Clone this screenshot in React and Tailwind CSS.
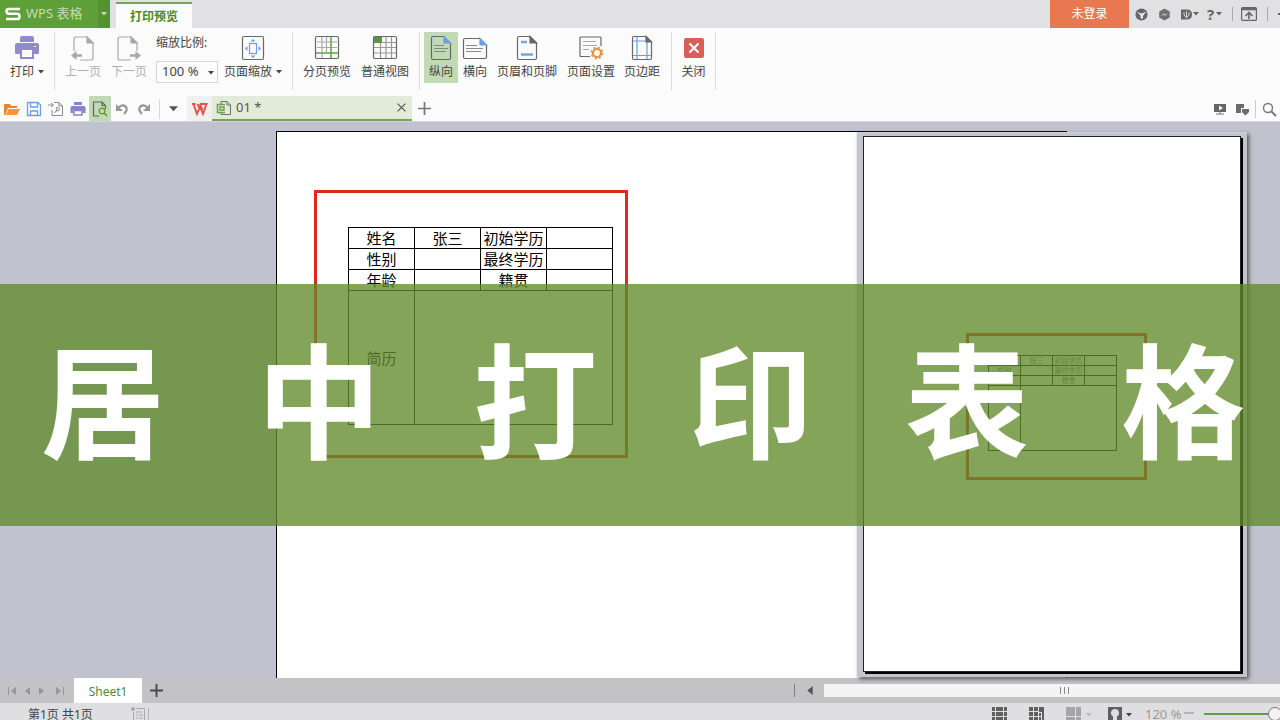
import { useState } from 'react'

const rows = [
  ['姓名', '张三', '初始学历', ''],
  ['性别', '', '最终学历', ''],
  ['年龄', '', '籍贯', ''],
]

const Caret = ({ className = '' }) => (
  <svg viewBox="0 0 6 4" className={`w-[6px] h-[4px] shrink-0 ${className}`} fill="currentColor"><path d="M0 0h6L3 3.6z" /></svg>
)

const Divider = ({ className = '' }) => <span className={`w-px shrink-0 ${className}`} />

/* ---------- Ribbon icons (26 x 26) ---------- */
const Icon = ({ children }) => (
  <svg viewBox="0 0 26 26" className="w-[26px] h-[26px] shrink-0" fill="none" stroke="#66696c" strokeWidth="1.2">{children}</svg>
)

const PrinterIcon = () => (
  <Icon>
    <g fill="#8f8cc9" stroke="none">
      <path d="M6 3q0-2 2-2h10q2 0 2 2v4H6z" />
      <path d="M3 8h20q2 0 2 2v8q0 1-1 1h-4v-4H6v4H2q-1 0-1-1v-8q0-2 2-2z" />
      <path d="M6 13h14v11H6zM8 15v7h10v-7z" fillRule="evenodd" />
    </g>
    <path d="M5 7.5h16M20 11.5h2" stroke="#fbfbfb" />
  </Icon>
)

const PrevIcon = () => (
  <Icon>
    <g stroke="#a9a9a9">
      <path d="M4 16V4q0-2 2-2h11l6 6v15q0 2-2 2H10" />
      <path d="M17 2v6h6z" fill="#a9a9a9" />
      <path d="M12 20.500H4" strokeWidth="2.600" />
      <path d="M6.500 16v9l-5.500-4.500z" fill="#a9a9a9" stroke="none" />
    </g>
  </Icon>
)

const NextIcon = () => (
  <Icon>
    <g stroke="#a9a9a9">
      <path d="M21 16V8l-6-6H4Q2 2 2 4v19q0 2 2 2h11" />
      <path d="M15 2v6h6z" fill="#a9a9a9" />
      <path d="M14 20.500h8" strokeWidth="2.600" />
      <path d="M19.500 16v9l5.500-4.500z" fill="#a9a9a9" stroke="none" />
    </g>
  </Icon>
)

const PageZoomIcon = () => (
  <Icon>
    <rect x="2.500" y="1.500" width="21" height="23" rx="1.500" />
    <rect x="9.500" y="8.500" width="7" height="10" stroke="#6b9fe0" />
    <g fill="#6b9fe0" stroke="none">
      <path d="M13 4l2.500 2.500h-5zM13 23l2.500-2.500h-5zM5 13.500L7.500 11v5zM21 13.500L18.500 11v5z" />
    </g>
  </Icon>
)

const PageBreakIcon = () => (
  <Icon>
    <path d="M3 7h13M3 12.500h13M8 2v15M12.500 2v15M16 7h7M16 12.500h7M8 18v6" stroke="#aaa" />
    <rect x="1.500" y="1.500" width="23" height="22" rx="1.500" />
    <path d="M17 2v21M2 18h22" stroke="#62a04a" strokeWidth="1.500" />
  </Icon>
)

const NormalViewIcon = () => (
  <Icon>
    <path d="M2 7.500h22M2 12.500h22M2 18h22M8.500 2v21M14 2v21M19.500 2v21" stroke="#999" />
    <rect x="1.500" y="1.500" width="23" height="22" rx="1.500" />
    <path d="M2 2h8v6H2z" fill="#5e9440" stroke="none" />
  </Icon>
)

const PortraitIcon = () => (
  <Icon>
    <path d="M16 1.500H5q-1.500 0-1.500 1.500v20q0 1.500 1.500 1.500h16q1.500 0 1.500-1.500V8" />
    <path d="M16 1.500v6.500h6.500z" fill="#6b9fe0" stroke="#6b9fe0" />
    <path d="M6 10.500h10M6 13.500h14M6 16.500h12" stroke="#7b8f78" />
  </Icon>
)

const LandscapeIcon = () => (
  <Icon>
    <path d="M18 3.500H3Q1.500 3.500 1.500 5v17q0 1.500 1.500 1.500h20q1.500 0 1.500-1.500V10" />
    <path d="M18 3.500V10h6.500z" fill="#6b9fe0" stroke="#6b9fe0" />
    <path d="M4 10.500h11M4 13.500h17M4 16.500h15" stroke="#8a8a8a" />
  </Icon>
)

const HeaderFooterIcon = () => (
  <Icon>
    <path d="M16 1.500H5q-1.500 0-1.500 1.500v20q0 1.500 1.500 1.500h16q1.500 0 1.500-1.500V8z" />
    <path d="M16 1.500v6.500h6.500z" fill="#66696c" />
    <path d="M7 7h6M7 19.500h12" stroke="#7aa5dd" strokeWidth="2.500" />
  </Icon>
)

const PageSetupIcon = () => (
  <Icon>
    <path d="M12 21.500H3q-1 0-1-1V3q0-1 1-1h19q1 0 1 1v8" />
    <path d="M5 6.500h13M5 10.500h14M5 14.500h6" stroke="#aaa" />
    <circle cx="19" cy="18" r="4" stroke="#e99340" strokeWidth="2.200" fill="#fff" />
    <circle cx="19" cy="18" r="5.500" stroke="#e99340" strokeWidth="1.800" strokeDasharray="2.200 2.120" />
  </Icon>
)

const MarginsIcon = () => (
  <Icon>
    <path d="M17 1.500H5Q3.500 1.500 3.500 3v20q0 1.500 1.500 1.500h16q1.500 0 1.500-1.500V7z" />
    <path d="M8 2v22M18 7v17M4 6h13M4 20.500h18" stroke="#6b9fe0" />
    <path d="M17 1.500V7h5.500z" fill="#66696c" />
  </Icon>
)

const CloseIcon = () => (
  <Icon>
    <rect x="3" y="3" width="20" height="20" rx="2" fill="#d65f58" stroke="none" />
    <path d="M8.500 8.500l9 9M17.500 8.500l-9 9" stroke="#fff" strokeWidth="2.200" />
  </Icon>
)

function RibbonButton({ icon, label, caret, muted, active, className }) {
  return (
    <button className={`flex flex-col items-center h-[51px] pt-[3px] shrink-0 ${className} ${active ? 'bg-[#c1dab5]' : ''} ${muted ? 'text-[#b0b0b0]' : 'text-[#444]'}`}>
      {icon}
      <span className="flex items-center gap-1 h-[22px] leading-[24px] whitespace-nowrap">
        {label}
        {caret && <Caret />}
      </span>
    </button>
  )
}

const Group = ({ children, className = '' }) => (
  <div className={`flex h-[58px] border-r border-[#dcdcdf] shrink-0 ${className}`}>{children}</div>
)

/* ---------- Title bar ---------- */
function TitleBar() {
  return (
    <header className="flex h-7 bg-[#e1e1e3] shrink-0 text-[#666]">
      <button className="flex items-center w-[110px] bg-[#5f9f38] text-[#c5dcb5] text-[13px] shrink-0">
        <svg viewBox="0 0 16 14" className="w-[16px] h-[14px] ml-[5px]" fill="none" stroke="#fff" strokeWidth="2.600">
          <path d="M15 2H4Q1.500 2 1.500 4.300T4 6.800h8q2.500 0 2.500 2.600T12 12H1" />
        </svg>
        <span className="ml-[5px] flex-1 text-left whitespace-nowrap">WPS 表格</span>
        <span className="flex items-center justify-center w-3 h-full bg-[#56922f]"><Caret /></span>
      </button>
      <button className="w-[76px] ml-[6px] mt-[2px] pt-[2px] border-t-2 border-[#75a35c] bg-[#fbfbfb] text-[#4a8a2b] font-bold text-xs shrink-0">打印预览</button>
      <div className="flex-1" />
      <button className="w-[79px] bg-[#e8784f] text-white text-xs shrink-0">未登录</button>
      <div className="flex items-center w-[151px] shrink-0 overflow-hidden">
        <button aria-label="皮肤" className="ml-[6px]">
          <svg viewBox="0 0 14 14" className="w-[13px] h-[13px]">
            <circle cx="7" cy="7" r="6.500" fill="#666" />
            <path d="M2 4l5 2 5-2-3 4-1 4-2-1 0-3z" fill="#e8e8e8" />
          </svg>
        </button>
        <button aria-label="服务" className="ml-[10px]">
          <svg viewBox="0 0 14 14" className="w-[13px] h-[13px]">
            <path d="M7 .5l5.700 3.200v6.600L7 13.500l-5.700-3.200V3.700z" fill="#707070" />
            <path d="M3 8.500l4-3v2l4-2-4 3.500v-2z" fill="#ddd" />
          </svg>
        </button>
        <button aria-label="稻壳" className="ml-[10px] flex items-center gap-px">
          <svg viewBox="0 0 12 13" className="w-[11px] h-[13px]">
            <path d="M0 1h6q6 0 6 5.500T6 12H0z" fill="#666" />
            <path d="M3 4q0 5 3 6 3-1 3-6M6 3v7" fill="none" stroke="#e1e1e3" />
          </svg>
          <Caret />
        </button>
        <button aria-label="帮助" className="ml-[8px] flex items-center gap-[2px] text-[15px] font-bold leading-none">
          <span>?</span>
          <Caret />
        </button>
        <Divider className="h-[14px] ml-[10px] bg-[#aaa]" />
        <button aria-label="隐藏功能区" className="ml-[8px]">
          <svg viewBox="0 0 16 14" className="w-[16px] h-[14px]" fill="none" stroke="#666" strokeWidth="1.200">
            <rect x=".6" y=".6" width="14.800" height="12.800" rx="1" />
            <path d="M1 2h14" strokeWidth="2.500" />
            <path d="M8 12V5.500M4.500 9L8 5.500 11.500 9" strokeWidth="1.600" />
          </svg>
        </button>
        <Divider className="h-[14px] ml-[10px] bg-[#aaa]" />
        <button aria-label="最小化" className="ml-[10px] w-3 h-[2px] bg-[#666] shrink-0" />
      </div>
    </header>
  )
}

/* ---------- Ribbon ---------- */
function Ribbon() {
  return (
    <nav className="flex h-[68px] pt-1 bg-[#fbfbfb] shrink-0 text-xs">
      <Group>
        <RibbonButton icon={<PrinterIcon />} label="打印" caret className="w-[54px]" />
      </Group>
      <Group className="pl-[5px] pr-[6px]">
        <RibbonButton icon={<PrevIcon />} label="上一页" muted className="w-[46px]" />
        <RibbonButton icon={<NextIcon />} label="下一页" muted className="w-[46px]" />
        <div className="w-[68px] px-1 text-[#444]">
          <label htmlFor="scale" className="block h-[29px] leading-[22px] whitespace-nowrap">缩放比例:</label>
          <div className="relative">
            <select id="scale" defaultValue="100" className="appearance-none block w-[62px] h-[22px] pl-[5px] border border-[#d5d5d8] bg-[#fdfdfd] text-[13px]">
              <option value="100">100 %</option>
              <option value="75">75 %</option>
              <option value="50">50 %</option>
            </select>
            <Caret className="absolute right-[2px] top-[10px] pointer-events-none" />
          </div>
        </div>
        <RibbonButton icon={<PageZoomIcon />} label="页面缩放" caret className="w-[66px]" />
      </Group>
      <Group className="px-[5px]">
        <RibbonButton icon={<PageBreakIcon />} label="分页预览" className="w-[58px]" />
        <RibbonButton icon={<NormalViewIcon />} label="普通视图" className="w-[58px]" />
      </Group>
      <Group className="pl-1 pr-[7px]">
        <RibbonButton icon={<PortraitIcon />} label="纵向" active className="w-[34px]" />
        <RibbonButton icon={<LandscapeIcon />} label="横向" className="w-[34px]" />
        <RibbonButton icon={<HeaderFooterIcon />} label="页眉和页脚" className="w-[70px]" />
        <RibbonButton icon={<PageSetupIcon />} label="页面设置" className="w-[58px]" />
        <RibbonButton icon={<MarginsIcon />} label="页边距" className="w-[44px]" />
      </Group>
      <Group>
        <RibbonButton icon={<CloseIcon />} label="关闭" className="w-[43px]" />
      </Group>
    </nav>
  )
}

/* ---------- Quick access + document tabs ---------- */
const Tool = ({ label, className = '', children }) => (
  <button aria-label={label} className={`flex items-center justify-center w-[22px] h-full shrink-0 ${className}`}>
    <svg viewBox="0 0 16 16" className="w-[16px] h-[16px]" fill="none">{children}</svg>
  </button>
)

function QuickBar() {
  return (
    <div className="flex h-[26px] bg-[#fbfbfb] border-b border-[#d4d5dc] shrink-0 pl-px">
      <Tool label="打开">
        <path d="M0 3h6l1 2h6v2H4l-3 7H0z" fill="#e8832c" />
        <path d="M4.500 8H16l-3 6H1.500z" fill="#f59637" />
      </Tool>
      <Tool label="保存">
        <path d="M1.500 1.500H12L14.500 4v10.500h-13z" stroke="#6c9fdc" strokeWidth="1.300" />
        <path d="M4.500 2v4h7V2M4.500 14v-4h7v4" stroke="#6c9fdc" strokeWidth="1.300" />
      </Tool>
      <Tool label="输出为PDF">
        <path d="M6 1.500h5l3.500 3.500v9.500H4V9M11 1.500V5h3.500" stroke="#8c8c8c" />
        <path d="M0 4h5M3 2l2.500 2L3 6" stroke="#8c8c8c" />
        <path d="M6 12q3-1 3-6 4 1 2 3.500l-3 .5" stroke="#8c8c8c" />
      </Tool>
      <Tool label="打印">
        <path d="M4 1h8v3H4zM2 5h12q1.500 0 1.500 1.500V12H13V9H3v3H.5V6.500Q.5 5 2 5z" fill="#8784c6" />
        <path d="M4 9.500h8V14H4z" stroke="#8784c6" strokeWidth="1.500" />
      </Tool>
      <Tool label="打印预览" className="bg-[#c1dab5]">
        <path d="M7 15H1.500V1H10l3.500 3.500V8M10 1v3.500h3.500" stroke="#5d6b58" strokeWidth="1.200" />
        <circle cx="10" cy="10" r="2.800" stroke="#5e9440" strokeWidth="1.200" />
        <path d="M12 12l3 3" stroke="#5e9440" strokeWidth="1.600" />
      </Tool>
      <Tool label="撤销">
        <path d="M4 7q4-4 7-2 4 3-1 8" stroke="#979797" strokeWidth="2.200" />
        <path d="M2 3v7h7z" fill="#979797" />
      </Tool>
      <Tool label="恢复">
        <path d="M12 7Q8 3 5 5q-4 3 1 8" stroke="#979797" strokeWidth="2.200" />
        <path d="M14 3v7H7z" fill="#979797" />
      </Tool>
      <Divider className="h-[20px] mt-[3px] ml-1 bg-[#d8d8d8]" />
      <button aria-label="自定义快速访问工具栏" className="flex items-center justify-center w-[27px] text-[#555]">
        <svg viewBox="0 0 10 6" className="w-[9px] h-[6px]"><path d="M0 0h10L5 5.500z" fill="currentColor" /></svg>
      </button>
      <Tool label="WPS" className="w-[25px] bg-[#f0f0f1]">
        <path d="M0 3h3.500M1.500 3l3.500 10 3-7 3 7 3.500-10H8M5.500 3l2 4M8 3l2.500 6" stroke="#e4504a" strokeWidth="1.900" />
      </Tool>
      <div className="flex items-center w-[200px] h-full bg-[#e2ebda] border-b-2 border-[#75a35c] text-[#555] text-[13px] shrink-0">
        <svg viewBox="0 0 16 16" className="w-[16px] h-[16px] ml-1" fill="none">
          <path d="M5 4V1.500h6L14.500 5v9.500H5V13M11 1.500V5h3.500" stroke="#707070" />
          <path d="M9 4.500H1.500v8H9M4 7h4v3H4z" stroke="#6da052" strokeWidth="1.500" />
        </svg>
        <button className="flex-1 ml-1 text-left">01 *</button>
        <button aria-label="关闭标签" className="mr-[6px]">
          <svg viewBox="0 0 8 8" className="w-[9px] h-[9px]" stroke="#555"><path d="M.5.5l7 7M7.500.5l-7 7" /></svg>
        </button>
      </div>
      <button aria-label="新建标签" className="flex items-center ml-[6px]">
        <svg viewBox="0 0 12 12" className="w-[13px] h-[13px]" stroke="#777" strokeWidth="1.600"><path d="M6 0v12M0 6h12" /></svg>
      </button>
      <div className="flex-1" />
      <Tool label="播放">
        <path d="M2 3h12v8H2zM7 4.500v5L11 7z" fill="#666" fillRule="evenodd" />
        <path d="M4 13h8M7 12h2" stroke="#777" />
      </Tool>
      <Tool label="窗口">
        <path d="M2 3h8v4H7v5H2zM8 8h7v3l-3.500 3.500L8 11z" fill="#6b6b6b" />
      </Tool>
      <Divider className="h-[18px] mt-[4px] mx-[2px] bg-[#ccc]" />
      <Tool label="查找">
        <circle cx="7" cy="7" r="4.500" stroke="#777" strokeWidth="1.400" />
        <path d="M10.500 10.500L15 15" stroke="#777" strokeWidth="2" />
      </Tool>
    </div>
  )
}

/* ---------- Printed form, full size and miniature ---------- */
function ResumeForm({ small }) {
  const cell = 'border border-black p-0 whitespace-nowrap overflow-hidden'
  const line = small ? 'h-[10px]' : 'h-[21px]'
  return (
    <table className={`table-fixed border-collapse text-center text-black ${small ? 'w-[129px] text-[7px] leading-[8px]' : 'w-[265px] text-[15px] leading-[20px]'}`}>
      <tbody>
        {rows.map((row, i) => (
          <tr key={i} className={line}>
            {row.map((text, j) => <td key={j} className={`${cell} ${small ? 'text-[#777]' : ''}`}>{text}</td>)}
          </tr>
        ))}
        <tr className={small ? 'h-[65px]' : 'h-[134px]'}>
          <td className={`${cell} ${small ? 'text-[#777]' : ''}`}>简历</td>
          <td colSpan={3} className={cell}></td>
        </tr>
      </tbody>
    </table>
  )
}

function Workspace() {
  return (
    <main className="relative flex-1 min-h-0 overflow-hidden bg-[#c0c3cf]">
      <div className="w-[791px] h-[1120px] ml-[276px] mt-[9px] pt-[58px] pl-[37px] border border-black bg-white">
        <div className="w-[314px] h-[268px] border-3 border-[#df2a1b] pt-[34px] pl-[31px]">
          <ResumeForm />
        </div>
      </div>
    </main>
  )
}

/* Floating whole-page preview laid over the workspace */
function PagePreview() {
  return (
    <aside className="absolute right-[33px] top-[132px] w-[390px] h-[545px] pt-[3px] pl-[6px] bg-[#c3c5cf] border-t border-[#d3d3d4] shadow-[2px_2px_4px_#55564f]">
      <div className="w-[378px] h-[536px] border border-[#222] bg-white shadow-[2px_2px_0_#000] pt-[196px] pl-[102px]">
        <div className="w-[181px] h-[147px] border-3 border-[#df2a1b] pt-[19px] pl-[19px]">
          <ResumeForm small />
        </div>
      </div>
    </aside>
  )
}

function Banner() {
  return (
    <h1 className="absolute inset-x-0 top-[284px] h-[242px] pl-[41px] pr-[35px] pb-2 flex items-center justify-between bg-[rgba(97,138,42,0.78)] text-white text-[124px] leading-none font-bold">
      {[...'居中打印表格'].map(char => <span key={char}>{char}</span>)}
    </h1>
  )
}

/* ---------- Bottom bars ---------- */
const Arrow = ({ label, d }) => (
  <button aria-label={label}>
    <svg viewBox="0 0 8 10" className="w-[8px] h-[10px]" fill="#97979a"><path d={d} /></svg>
  </button>
)

function SheetBar() {
  return (
    <div className="flex items-center h-[25px] bg-[#c3c3c5] shrink-0 overflow-hidden">
      <div className="flex items-center w-[74px] pl-2 shrink-0">
        <Arrow label="第一张" d="M0 1h1v8H0zM8 1v8L3 5z" />
        <span className="ml-2 flex gap-[5px]">
          <Arrow label="上一张" d="M6 1v8L1 5z" />
          <Arrow label="下一张" d="M2 1v8l5-4z" />
        </span>
        <span className="ml-[11px] flex"><Arrow label="最后一张" d="M0 1v8l5-4zM7 1h1v8H7z" /></span>
      </div>
      <button className="w-[68px] h-full pt-[2px] bg-white text-[#4e8c34] text-xs">Sheet1</button>
      <button aria-label="新建工作表" className="ml-2">
        <svg viewBox="0 0 12 12" className="w-[13px] h-[13px]" stroke="#4c4c4c" strokeWidth="1.800"><path d="M6 0v12M0 6h12" /></svg>
      </button>
      <div className="flex-1" />
      <div className="flex items-center w-[510px] -mr-6 shrink-0">
        <Divider className="h-[13px] bg-[#808080]" />
        <button aria-label="向左滚动" className="w-[29px] flex justify-center">
          <svg viewBox="0 0 6 10" className="w-[6px] h-[9px]" fill="#555"><path d="M6 0v10L0 5z" /></svg>
        </button>
        <div className="flex-1 flex items-center justify-center gap-[3px] h-[13px] bg-[#f4f4f5]">
          <Divider className="h-[7px] bg-[#888]" />
          <Divider className="h-[7px] bg-[#888]" />
          <Divider className="h-[7px] bg-[#888]" />
        </div>
      </div>
    </div>
  )
}

const ViewIcon = ({ label, fill = '#606060', className = '', children }) => (
  <button aria-label={label} className={className}>
    <svg viewBox="0 0 15 15" className="w-[15px] h-[15px]" fill={fill}>{children}</svg>
  </button>
)

function StatusBar() {
  const [zoom, setZoom] = useState(120)
  return (
    <footer className="flex h-[17px] overflow-hidden bg-[#dfdfe1] shrink-0 text-xs text-[#444]">
      <div className="flex items-start flex-1 pl-7 pt-[3px]">
        <span className="leading-[18px] w-[68px] whitespace-nowrap">第1页 共1页</span>
        <svg viewBox="0 0 14 14" className="w-[14px] h-[14px] ml-[35px] mt-px" fill="none" stroke="#aaa">
          <circle cx="2" cy="2" r="2" fill="#aaa" stroke="none" />
          <path d="M5 1.500h8.500V14M2.500 5v9M5 5h6M5 8h2M8 8h4M5 11h2M8 11h4" />
        </svg>
        <Divider className="h-[14px] mt-[2px] ml-[3px] bg-[#b5b5b5]" />
      </div>
      <div className="flex items-start w-[288px] pt-1 shrink-0">
        <ViewIcon label="普通视图">
          <path d="M0 0h3v4H0zM4 0h7v4H4zM12 0h3v4h-3zM0 5h3v4H0zM4 5h7v4H4zM12 5h3v4h-3zM0 10h3v4H0zM4 10h7v4H4zM12 10h3v4h-3z" />
        </ViewIcon>
        <ViewIcon label="分页视图" className="ml-[22px]">
          <path d="M0 0h4v4H0zM5 0h4v4H5zM10 0h5v15h-2V5h-3zM0 5h4v4H0zM5 5h4v4H5zM0 10h4v4H0zM5 10h4v4H5zM10 6h2v3h-2zM10 10h2v4h-2z" />
        </ViewIcon>
        <ViewIcon label="阅读模式" fill="#a5a5a7" className="ml-[22px]">
          <path d="M0 0h9v9H0zM10 0h5v9h-5zM0 10h9v4H0zM10 10h5v4h-5z" />
        </ViewIcon>
        <Caret className="mt-[6px] ml-[5px] text-[#bbb]" />
        <ViewIcon label="护眼模式" className="ml-[16px]">
          <path d="M0 0h14v15H0zM7 2a4 4 0 0 0-2 7.500V13h4V9.500A4 4 0 0 0 7 2z" fillRule="evenodd" />
        </ViewIcon>
        <Caret className="mt-[6px] ml-[3px]" />
        <label htmlFor="zoom" className="ml-[13px] w-[40px] text-[13px] leading-[14px] text-[#999] whitespace-nowrap">{zoom} %</label>
        <button aria-label="缩小" className="mt-[5px] ml-[2px] w-[10px] h-[2px] bg-[#b5b5b7] shrink-0" />
        <input
          id="zoom"
          type="range"
          min="10"
          max="210"
          value={zoom}
          onChange={e => setZoom(Number(e.target.value))}
          className="appearance-none w-[132px] h-[14px] ml-[10px] shrink-0 bg-transparent [&::-webkit-slider-runnable-track]:h-[2px] [&::-webkit-slider-runnable-track]:bg-[#5f9f45] [&::-webkit-slider-thumb]:appearance-none [&::-webkit-slider-thumb]:size-[14px] [&::-webkit-slider-thumb]:-mt-[6px] [&::-webkit-slider-thumb]:rounded-full [&::-webkit-slider-thumb]:border [&::-webkit-slider-thumb]:border-[#777] [&::-webkit-slider-thumb]:bg-[#f3f3f3]"
        />
      </div>
    </footer>
  )
}

export default function App() {
  return (
    <div className="relative flex flex-col h-screen overflow-hidden font-['Noto_Sans','Noto_Sans_CJK_SC',sans-serif]">
      <TitleBar />
      <Ribbon />
      <QuickBar />
      <Workspace />
      <SheetBar />
      <StatusBar />
      <PagePreview />
      <Banner />
    </div>
  )
}
